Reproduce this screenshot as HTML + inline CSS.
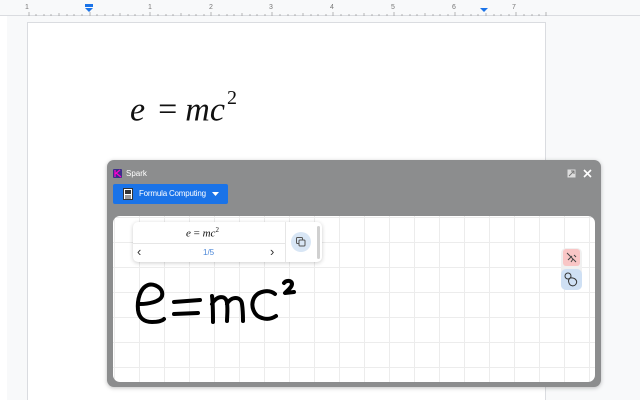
<!DOCTYPE html>
<html style="overflow:hidden;width:640px;height:400px"><head><meta charset="utf-8"><style>
*{margin:0;padding:0;box-sizing:border-box}
body{width:640px;height:400px;overflow:hidden;background:#f8f9fa;font-family:"Liberation Sans",sans-serif;position:relative}
.abs{position:absolute}
</style></head><body>
<div class="abs" style="left:0;top:0;width:7px;height:400px;background:#fff"></div>
<div class="abs" style="left:0;top:0;width:640px;height:16px;background:#f8f9fa;border-bottom:1px solid #dadce0"></div>
<svg class="abs" style="left:0;top:0" width="640" height="17">
<g fill="#777" font-size="7" font-family="Liberation Sans">
<text x="25" y="9">1</text><text x="148" y="9">1</text><text x="209" y="9">2</text><text x="269" y="9">3</text><text x="330" y="9">4</text><text x="391" y="9">5</text><text x="452" y="9">6</text><text x="512" y="9">7</text>
</g>
<g stroke="#999" stroke-width="0.7">
<path d="M29 12v4M36 14v2M44 14v2M51 14v2M59 13v3M67 14v2M74 14v2M82 14v2M90 12v4M97 14v2M105 14v2M113 14v2M120 13v3M128 14v2M135 14v2M143 14v2M150 12v4M158 14v2M166 14v2M173 14v2M181 13v3M189 14v2M196 14v2M204 14v2M211 12v4M219 14v2M227 14v2M234 14v2M242 13v3M250 14v2M257 14v2M265 14v2M272 12v4M280 14v2M288 14v2M295 14v2M303 13v3M311 14v2M318 14v2M326 14v2M333 12v4M341 14v2M349 14v2M356 14v2M364 13v3M372 14v2M379 14v2M387 14v2M394 12v4M402 14v2M410 14v2M417 14v2M425 13v3M433 14v2M440 14v2M448 14v2M455 12v4M463 14v2M471 14v2M478 14v2M486 13v3M494 14v2M501 14v2M509 14v2M516 12v4M524 14v2M532 14v2M539 14v2M546 12v4"/>
</g>
<path d="M85 4h8v3h-8z" fill="#1a73e8"/><path d="M85 8h8l-4 4z" fill="#1a73e8"/>
<path d="M480 8h8l-4 4z" fill="#1a73e8"/>
</svg>
<div class="abs" style="left:27px;top:22px;width:519px;height:378px;background:#fff;border:1px solid #dadce0;border-bottom:none"></div>
<div class="abs" style="left:130px;top:82px;font-family:'Liberation Serif',serif;font-size:34px;color:#111;white-space:nowrap;line-height:40px"><i>e</i><span style="margin:0 8px 0 13px">=</span><i>mc</i><sup style="font-size:20px;position:relative;top:-4px;margin-left:2px">2</sup></div>
<div class="abs" style="left:107px;top:160px;width:494px;height:227px;background:#8c8d8e;border-radius:7px;box-shadow:0 1px 4px rgba(0,0,0,.25)"></div>
<svg class="abs" style="left:113px;top:169px" width="9" height="9"><rect width="9" height="9" rx="1" fill="#3b2d8a"/><path d="M2 1v7M2 5l5-4M3 4l5 4" stroke="#f0c" stroke-width="1.3" fill="none"/></svg>
<div class="abs" style="left:126px;top:169px;font-size:8px;color:#fff">Spark</div>
<svg class="abs" style="left:567px;top:169px" width="26" height="10"><rect x="0.5" y="0.5" width="8" height="8" fill="#ddd"/><path d="M2 7l5-5M4 2h3v3" stroke="#777" fill="none"/><path d="M17 1l7 7M24 1l-7 7" stroke="#fff" stroke-width="1.6"/></svg>
<div class="abs" style="left:113px;top:184px;width:115px;height:20px;background:#1a73e8;border-radius:2px"></div>
<svg class="abs" style="left:123px;top:188px" width="10" height="12"><rect x="0.5" y="0.5" width="9" height="11" fill="#fff" stroke="#333"/><rect x="2" y="2" width="6" height="4" fill="#333"/><path d="M2 8h6M2 10h6" stroke="#333"/></svg>
<div class="abs" style="left:139px;top:189px;font-size:8px;color:#fff;letter-spacing:-0.2px;white-space:nowrap">Formula Computing</div>
<svg class="abs" style="left:212px;top:192px" width="8" height="5"><path d="M0 0h7l-3.5 4z" fill="#fff"/></svg>
<div class="abs" style="left:113px;top:216px;width:482px;height:166px;background-color:#fff;border-radius:7px;background-image:linear-gradient(#ececec 1px,transparent 1px),linear-gradient(90deg,#ececec 1px,transparent 1px);background-size:25px 25px;background-position:26px 1px"></div>
<svg class="abs" style="left:113px;top:216px" width="482" height="166">
<g fill="none" stroke="#000" stroke-width="4" stroke-linecap="round" stroke-linejoin="round">
<path d="M27 88c8 0 20-2 22-8 2-8-8-13-14-11-8 3-11 15-10 25 1 8 6 12 14 12 6 0 10-1 12-3"/>
<path d="M61 86l26-2M61 98l24-1"/>
<path d="M100 106c0-10 0-18-1-26M99 88c4-8 14-10 15-1 1 6 0 14 0 18M114 88c4-8 14-8 15 0 1 7 1 12 1 17"/>
<path d="M162 78c-6-5-17-3-21 4-4 8 0 18 8 20 6 2 11 0 14-2"/>
<path d="M171 67c2-3 8-3 8 1 0 3-4 6-7 9l9-1"/>
</g>
</svg>
<div class="abs" style="left:133px;top:222px;width:189px;height:40px;background:#fff;border-radius:5px;box-shadow:0 1px 4px rgba(0,0,0,.2)"></div>
<div class="abs" style="left:133px;top:243px;width:152px;height:1px;background:#e6e6e6"></div>
<div class="abs" style="left:285px;top:222px;width:1px;height:40px;background:#e6e6e6"></div>
<div class="abs" style="left:186px;top:226px;font-family:'Liberation Serif',serif;font-size:11px;color:#111;white-space:nowrap"><i>e</i> = <i>mc</i><sup style="font-size:7px">2</sup></div>
<div class="abs" style="left:137px;top:244px;font-size:13px;color:#333">‹</div>
<div class="abs" style="left:270px;top:244px;font-size:13px;color:#333">›</div>
<div class="abs" style="left:203px;top:248px;font-size:8px;color:#4a86d8">1/5</div>
<div class="abs" style="left:291px;top:232px;width:20px;height:20px;border-radius:50%;background:#d8e6f5"></div>
<svg class="abs" style="left:296px;top:237px" width="10" height="10"><rect x="0.5" y="0.5" width="6" height="6" rx="1" fill="none" stroke="#555"/><rect x="3" y="3" width="6" height="6" rx="1" fill="#d8e6f5" stroke="#555"/></svg>
<div class="abs" style="left:317px;top:226px;width:3px;height:33px;background:#d0d0d0;border-radius:2px"></div>
<div class="abs" style="left:561px;top:248px;width:21px;height:42px;background:#f0f0f0;border-radius:5px"></div>
<div class="abs" style="left:563px;top:249px;width:17px;height:17px;background:#f9c6c6;border-radius:3px"></div>
<svg class="abs" style="left:564px;top:250px" width="15" height="15"><path d="M3 3l9 9M4 10l4-4M7 12l2-3M10 5l2 2" stroke="#444" fill="none"/></svg>
<div class="abs" style="left:561px;top:269px;width:21px;height:21px;background:#cfe0f4;border-radius:5px"></div>
<svg class="abs" style="left:563px;top:271px" width="17" height="17"><circle cx="5" cy="5" r="3" fill="none" stroke="#333"/><path d="M7 7c5-1 8 3 6 6-2 3-6 2-7-1-1-2 0-4 1-5" fill="none" stroke="#333"/></svg>
</body></html>
